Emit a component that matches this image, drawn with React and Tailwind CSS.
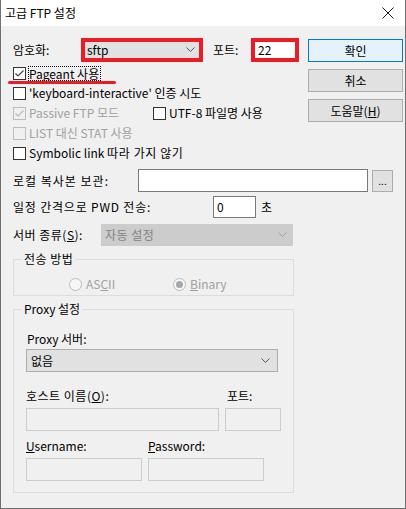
import React from "react";

function Check({ checked, disabled }) {
  return (
    <span
      className={`w-[13px] h-[13px] border flex items-center justify-center shrink-0 ${
        disabled ? "border-[#bcbcbc] bg-[#f0f0f0]" : "border-[#333333] bg-white"
      }`}
    >
      {checked && (
        <svg width="11" height="11" viewBox="0 0 11 11">
          <path
            d="M1.5 5.5 L4 8 L9.5 2.5"
            fill="none"
            stroke={disabled ? "#bcbcbc" : "#444"}
            strokeWidth="1.2"
          />
        </svg>
      )}
    </span>
  );
}

function Chevron({ color = "#555" }) {
  return (
    <svg width="9" height="6" viewBox="0 0 9 6">
      <path d="M0.5 0.5 L4.5 4.5 L8.5 0.5" fill="none" stroke={color} strokeWidth="1" />
    </svg>
  );
}

function Radio({ checked }) {
  return (
    <span className="w-[13px] h-[13px] rounded-full border border-[#bcbcbc] bg-[#f7f7f7] flex items-center justify-center shrink-0">
      {checked && <span className="w-[7px] h-[7px] rounded-full bg-[#a8a8a8]" />}
    </span>
  );
}

export default function App() {
  return (
    <div className="w-[406px] h-[509px] bg-[#f0f0f0] border-x border-b border-[#707070] flex flex-col text-[12px] text-black leading-[16px] relative font-['Noto_Sans_CJK_KR','Noto_Sans',sans-serif]">
      {/* title bar */}
      <div className="h-[26px] bg-white flex items-center justify-between pl-[4px] pr-[11px] shrink-0">
        <span className="text-[12px]">고급 FTP 설정</span>
        <svg width="12" height="12" viewBox="0 0 12 12">
          <path d="M0.5 0.5 L11.5 11.5 M11.5 0.5 L0.5 11.5" stroke="#000" strokeWidth="0.9" />
        </svg>
      </div>

      <div className="pl-[12px] pt-[12px] flex flex-col">
        <div className="flex">
          {/* left column */}
          <div className="w-[287px] flex flex-col">
            <div className="h-[24px] flex items-center">
              <span className="w-[68px]">암호화:</span>
              <div className="w-[122px] h-[24px] border-4 border-[#ed1c24] bg-[#e1e1e1] flex items-center justify-between pl-[2px] pr-[4px]">
                <span>sftp</span>
                <Chevron />
              </div>
              <span className="ml-[10px] w-[38px]">포트:</span>
              <div className="w-[48px] h-[24px] border-4 border-[#ed1c24] bg-white flex items-center pl-[3px]">
                22
              </div>
            </div>

            <div className="flex flex-col mt-[1px]">
              <div className="h-[20px] flex items-center gap-[2px]">
                <Check checked />
                <span className="border border-dotted border-black pr-[1px] leading-[13px]">Pageant 사용</span>
              </div>
              <div className="h-[20px] flex items-center gap-[3px]">
                <Check />
                <span>'keyboard-interactive' 인증 시도</span>
              </div>
              <div className="h-[20px] flex items-center">
                <div className="w-[140px] flex items-center gap-[3px] text-[#a0a0a0]">
                  <Check checked disabled />
                  <span>Passive FTP 모드</span>
                </div>
                <div className="flex items-center gap-[3px]">
                  <Check />
                  <span>UTF-8 파일명 사용</span>
                </div>
              </div>
              <div className="h-[20px] flex items-center gap-[3px] text-[#a0a0a0]">
                <Check disabled />
                <span>LIST 대신 STAT 사용</span>
              </div>
              <div className="h-[20px] flex items-center gap-[3px]">
                <Check />
                <span>
                  Symbolic link <span className="tracking-[0.6px]">따라 가지 않기</span>
                </span>
              </div>
            </div>
          </div>

          {/* buttons */}
          <div className="ml-[8px] mt-[1px] flex flex-col gap-[7px]">
            <button className="w-[95px] h-[23px] border border-[#0078d7] bg-[#e5f1fb]">확인</button>
            <button className="w-[95px] h-[23px] border border-[#adadad] bg-[#e1e1e1]">취소</button>
            <button className="w-[95px] h-[23px] border border-[#adadad] bg-[#e1e1e1]">
              도움말(<u>H</u>)
            </button>
          </div>
        </div>

        <div className="mt-[6px] h-[23px] flex items-center">
          <span className="w-[125px] tracking-[1px]">로컬 복사본 보관:</span>
          <div className="w-[230px] h-[23px] border border-[#7a7a7a] bg-white" />
          <button className="ml-[4px] w-[21px] h-[22px] border border-[#adadad] bg-[#e1e1e1] text-[10px] leading-[18px]">
            ...
          </button>
        </div>

        <div className="mt-[4px] h-[22px] flex items-center">
          <span className="w-[200px] tracking-[0.8px]">일정 간격으로 PWD 전송:</span>
          <div className="w-[43px] h-[22px] border border-[#7a7a7a] bg-white flex items-center pl-[3px]">0</div>
          <span className="ml-[5px]">초</span>
        </div>

        <div className="mt-[6px] h-[22px] flex items-center">
          <span className="w-[88px] tracking-[0.5px]">
            서버 종류(<u>S</u>):
          </span>
          <div className="w-[192px] h-[22px] border border-[#cccccc] bg-[#cccccc] text-[#838383] flex items-center justify-between pl-[3px] pr-[5px]">
            <span className="tracking-[0.5px]">자동 설정</span>
            <Chevron color="#a0a0a0" />
          </div>
        </div>

        {/* 전송 방법 */}
        <div className="mt-[13px] w-[281px] h-[37px] border border-[#dcdcdc] relative">
          <span className="absolute left-[8px] top-[-9px] px-[2px] bg-[#f0f0f0] tracking-[0.5px]">전송 방법</span>
          <div className="flex items-center pt-[16px] pl-[55px] text-[#a0a0a0]">
            <div className="w-[104px] flex items-center gap-[4px]">
              <Radio />
              <span>
                AS<u>C</u>II
              </span>
            </div>
            <div className="flex items-center gap-[4px]">
              <Radio checked />
              <span>
                <u>B</u>inary
              </span>
            </div>
          </div>
        </div>

        {/* Proxy 설정 */}
        <div className="mt-[13px] w-[281px] h-[184px] border border-[#dcdcdc] relative">
          <span className="absolute left-[8px] top-[-9px] px-[2px] bg-[#f0f0f0]">Proxy 설정</span>
          <div className="flex flex-col pl-[12px] pt-[21px]">
            <span className="pl-[1px]">Proxy 서버:</span>
            <div className="mt-[2px] w-[252px] h-[23px] border border-[#adadad] bg-[#e1e1e1] flex items-center justify-between pl-[4px] pr-[7px]">
              <span>없음</span>
              <Chevron />
            </div>

            <div className="mt-[16px] flex">
              <span className="w-[201px] tracking-[0.5px]">
                호스트 이름(<u>O</u>):
              </span>
              <span>포트:</span>
            </div>
            <div className="mt-[4px] flex gap-[6px]">
              <div className="w-[193px] h-[23px] border border-[#cccccc]" />
              <div className="w-[56px] h-[23px] border border-[#cccccc]" />
            </div>

            <div className="mt-[7px] flex">
              <span className="w-[122px]">
                <u>U</u>sername:
              </span>
              <span>
                <u>P</u>assword:
              </span>
            </div>
            <div className="mt-[4px] flex gap-[6px]">
              <div className="w-[116px] h-[23px] border border-[#cccccc]" />
              <div className="w-[116px] h-[23px] border border-[#cccccc]" />
            </div>
          </div>
        </div>
      </div>

      {/* red annotation underline */}
      <span className="absolute left-[7px] top-[81px] w-[108px] h-[3px] rounded-full bg-[#ed1c24]" />
    </div>
  );
}
